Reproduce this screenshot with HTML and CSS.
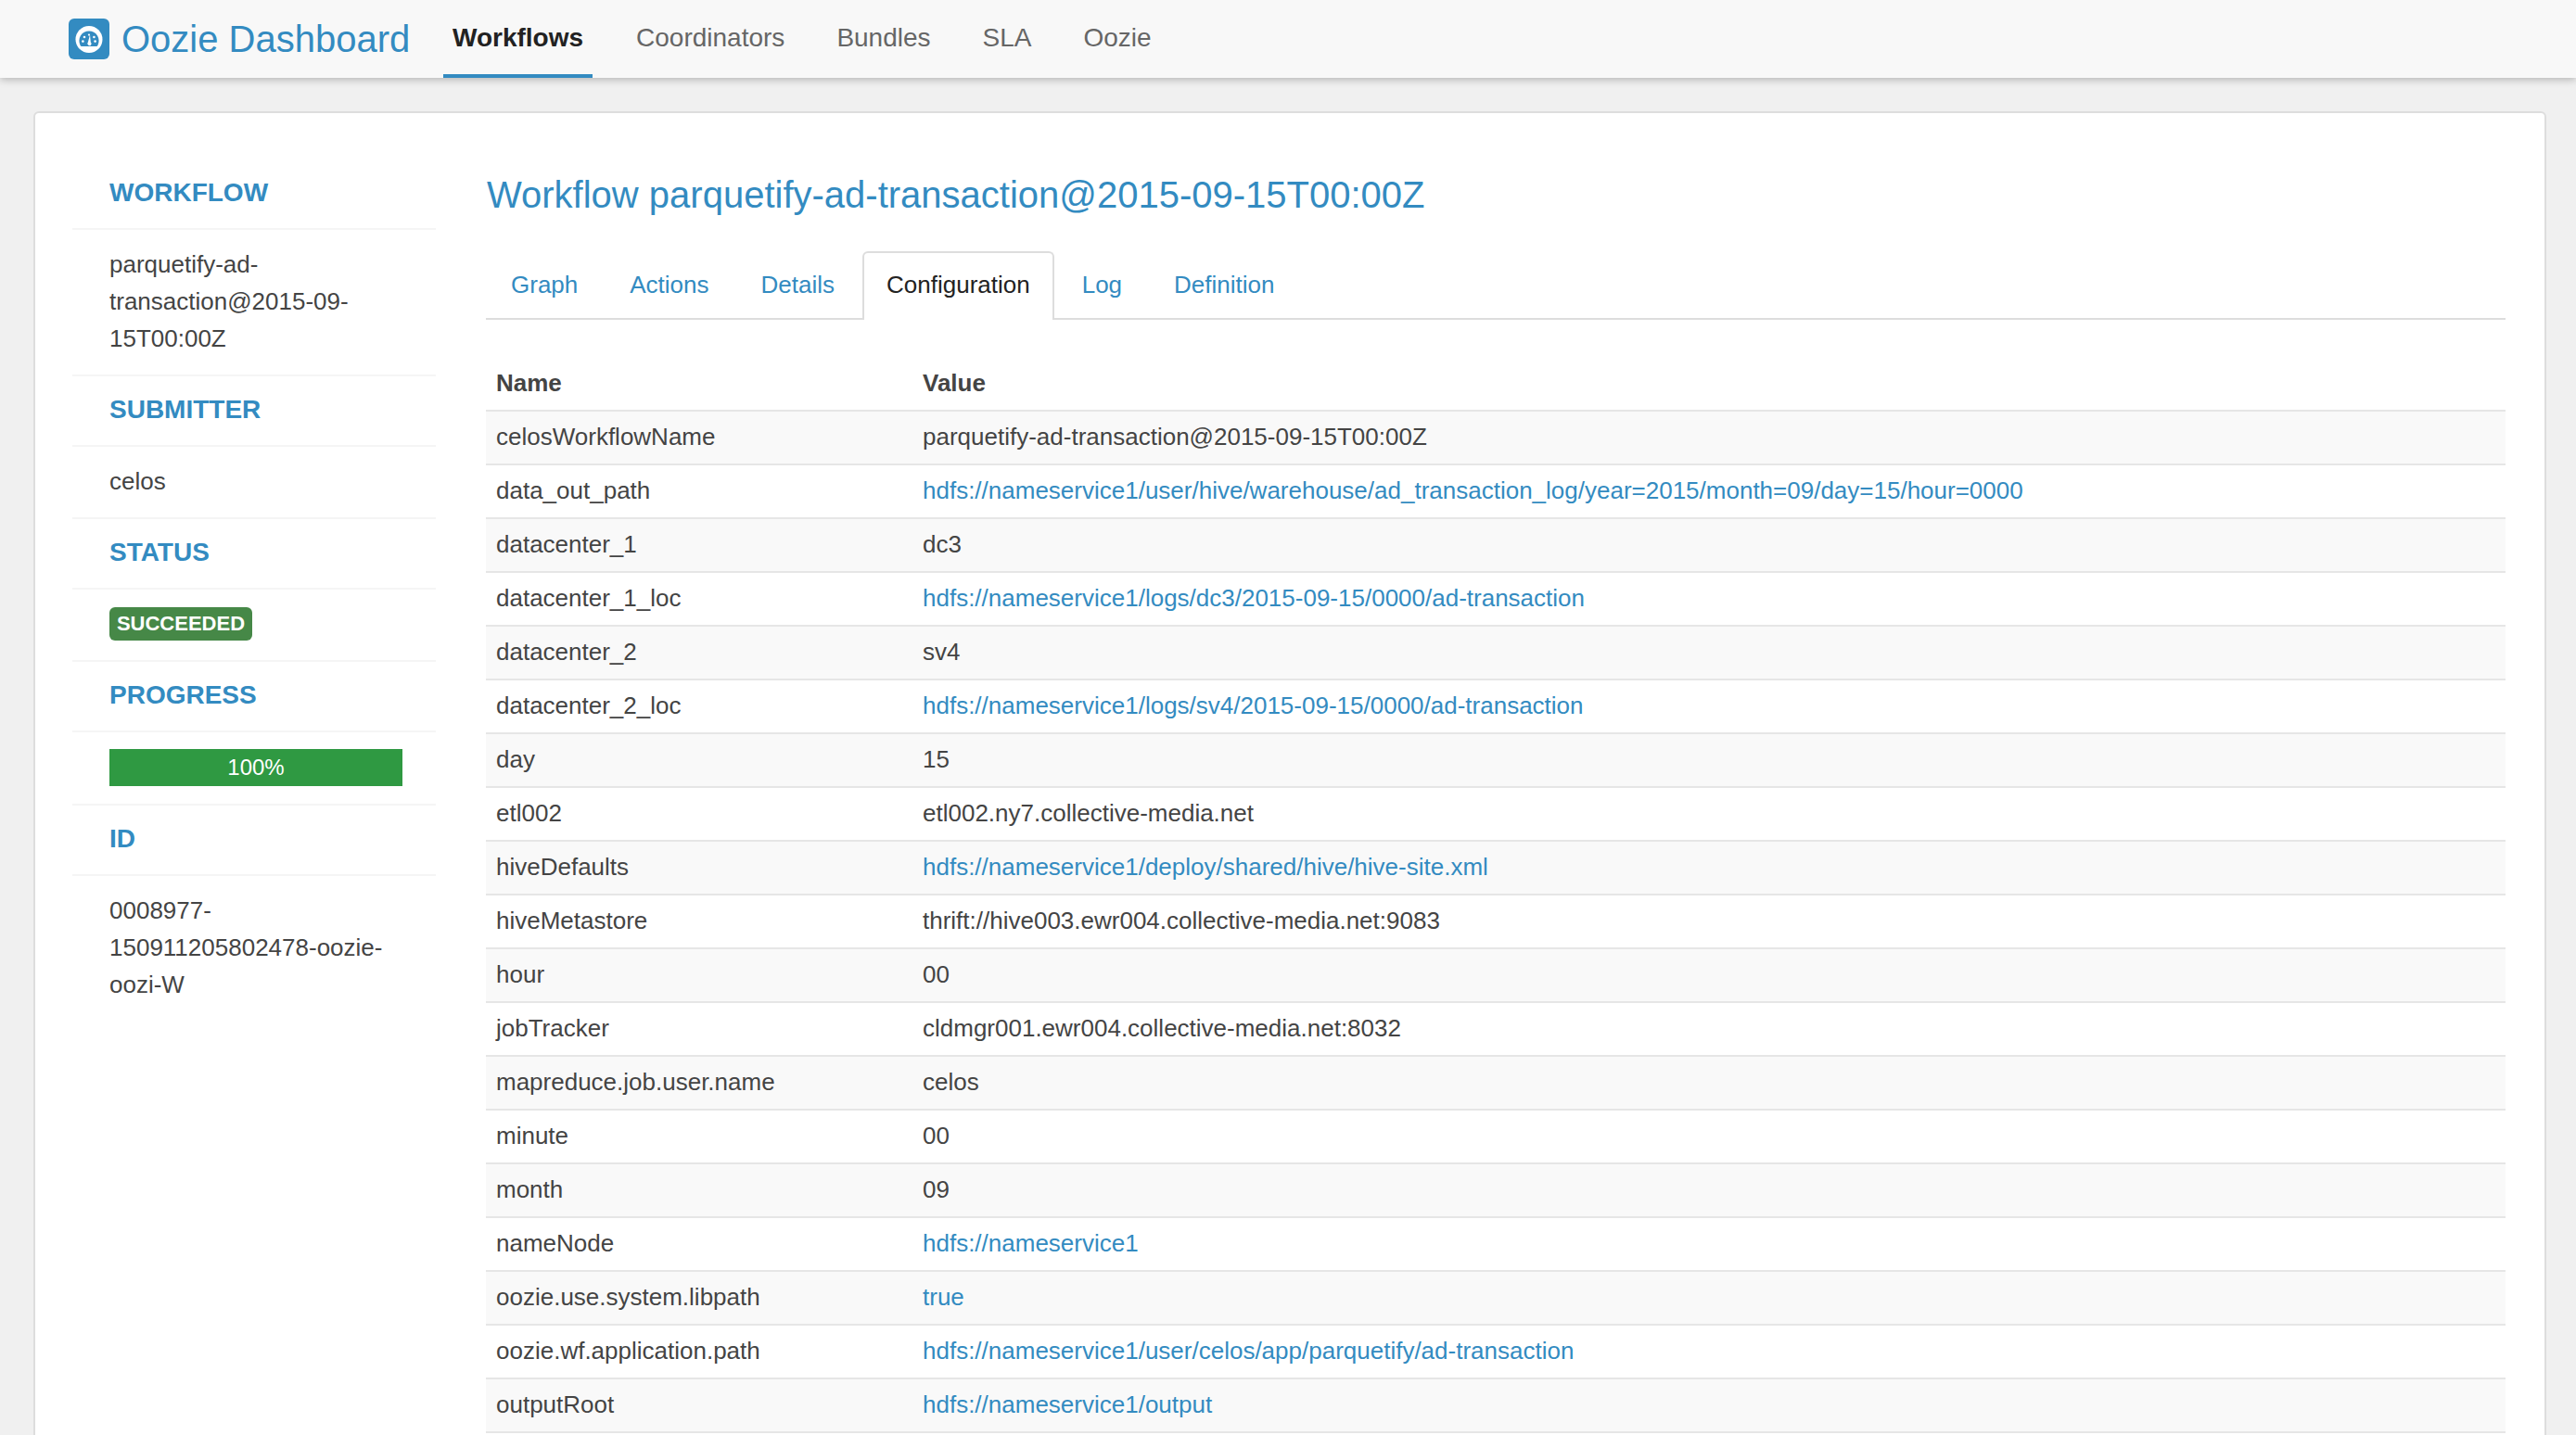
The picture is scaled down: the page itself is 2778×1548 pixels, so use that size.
FILE: index.html
```html
<!DOCTYPE html>
<html lang="en">
<head>
<meta charset="utf-8">
<title>Oozie Dashboard</title>
<link rel="stylesheet" href="styles.css">
</head>
<body>
<header class="navbar">
  <a class="brand" href="#">
    <svg class="logo" viewBox="0 0 44 44" aria-hidden="true">
      <rect width="44" height="44" rx="6" fill="#338bc1"/>
      <circle cx="22" cy="22.5" r="14.5" fill="#fff"/>
      <path d="M12.6 29 A10.6 10.6 0 1 1 31.4 29 A1.6 1.6 0 0 1 30 30 H14 A1.6 1.6 0 0 1 12.6 29 Z" fill="#338bc1"/>
      <path d="M23 17.5 L23.8 25.4 A2.1 2.1 0 1 1 20.9 25.6 Z" fill="#fff"/>
      <circle cx="15.4" cy="24.6" r="1.3" fill="#fff"/>
      <circle cx="17" cy="20" r="1.3" fill="#fff"/>
      <circle cx="22" cy="17.6" r="1.1" fill="#fff"/>
      <circle cx="27.4" cy="20" r="1.3" fill="#fff"/>
      <circle cx="28.6" cy="24.6" r="1.3" fill="#fff"/>
    </svg>
    <span>Oozie Dashboard</span>
  </a>
  <nav class="mainnav">
    <a class="active" href="#">Workflows</a>
    <a href="#">Coordinators</a>
    <a href="#">Bundles</a>
    <a href="#">SLA</a>
    <a href="#">Oozie</a>
  </nav>
</header>
<main class="card">
  <aside class="sidebar">
    <h4 class="label">WORKFLOW</h4>
    <div class="value">parquetify-ad-transaction@2015-09-15T00:00Z</div>
    <h4 class="label">SUBMITTER</h4>
    <div class="value">celos</div>
    <h4 class="label">STATUS</h4>
    <div class="value"><span class="badge">SUCCEEDED</span></div>
    <h4 class="label">PROGRESS</h4>
    <div class="value"><div class="progress">100%</div></div>
    <h4 class="label">ID</h4>
    <div class="value last">0008977-150911205802478-oozie-oozi-W</div>
  </aside>
  <section class="content">
    <h1 class="title">Workflow parquetify-ad-transaction@2015-09-15T00:00Z</h1>
    <ul class="tabs">
      <li><a href="#">Graph</a></li>
      <li><a href="#">Actions</a></li>
      <li><a href="#">Details</a></li>
      <li class="active"><a href="#">Configuration</a></li>
      <li><a href="#">Log</a></li>
      <li><a href="#">Definition</a></li>
    </ul>
    <table class="conf">
      <colgroup><col class="namecol"><col></colgroup>
      <thead><tr><th>Name</th><th>Value</th></tr></thead>
      <tbody>
        <tr><td>celosWorkflowName</td><td>parquetify-ad-transaction@2015-09-15T00:00Z</td></tr>
        <tr><td>data_out_path</td><td><a href="#">hdfs://nameservice1/user/hive/warehouse/ad_transaction_log/year=2015/month=09/day=15/hour=0000</a></td></tr>
        <tr><td>datacenter_1</td><td>dc3</td></tr>
        <tr><td>datacenter_1_loc</td><td><a href="#">hdfs://nameservice1/logs/dc3/2015-09-15/0000/ad-transaction</a></td></tr>
        <tr><td>datacenter_2</td><td>sv4</td></tr>
        <tr><td>datacenter_2_loc</td><td><a href="#">hdfs://nameservice1/logs/sv4/2015-09-15/0000/ad-transaction</a></td></tr>
        <tr><td>day</td><td>15</td></tr>
        <tr><td>etl002</td><td>etl002.ny7.collective-media.net</td></tr>
        <tr><td>hiveDefaults</td><td><a href="#">hdfs://nameservice1/deploy/shared/hive/hive-site.xml</a></td></tr>
        <tr><td>hiveMetastore</td><td>thrift://hive003.ewr004.collective-media.net:9083</td></tr>
        <tr><td>hour</td><td>00</td></tr>
        <tr><td>jobTracker</td><td>cldmgr001.ewr004.collective-media.net:8032</td></tr>
        <tr><td>mapreduce.job.user.name</td><td>celos</td></tr>
        <tr><td>minute</td><td>00</td></tr>
        <tr><td>month</td><td>09</td></tr>
        <tr><td>nameNode</td><td><a href="#">hdfs://nameservice1</a></td></tr>
        <tr><td>oozie.use.system.libpath</td><td><a href="#">true</a></td></tr>
        <tr><td>oozie.wf.application.path</td><td><a href="#">hdfs://nameservice1/user/celos/app/parquetify/ad-transaction</a></td></tr>
        <tr><td>outputRoot</td><td><a href="#">hdfs://nameservice1/output</a></td></tr>
      </tbody>
    </table>
  </section>
</main>
</body>
</html>
```
FILE: styles.css
```css
* { box-sizing: border-box; }
html, body { height: 100%; }
body {
  margin: 0;
  height: 1548px;
  overflow: hidden;
  background: #f0f0f0;
  color: #444;
  font-family: "Liberation Sans", Arial, sans-serif;
  font-size: 26px;
  line-height: 40px;
}
a { color: #338bc1; text-decoration: none; }

.navbar {
  display: flex;
  align-items: stretch;
  height: 84px;
  padding-left: 74px;
  background: #f8f8f8;
  box-shadow: 0 2px 8px rgba(0, 0, 0, .25);
  font-size: 28px;
}
.brand {
  display: flex;
  align-items: center;
  gap: 13px;
  width: 404px;
  color: #338bc1;
  font-size: 40px;
}
.logo { width: 44px; height: 44px; flex: none; margin-top: -1px; }
.mainnav { display: flex; gap: 36px; }
.mainnav a {
  padding: 2px 10px 4px;
  color: #666;
  display: flex;
  align-items: center;
}
.mainnav a.active {
  margin-right: 1px;
  color: #222;
  font-weight: 700;
  border-bottom: 4px solid #338bc1;
  padding-bottom: 0;
}

.card {
  display: flex;
  margin: 36px 32px 0 36px;
  min-height: 1600px;
  padding: 50px 42px 0 40px;
  background: #fff;
  border: 2px solid #ddd;
  border-radius: 6px;
}
.sidebar { width: 392px; flex: none; }
.label {
  margin: 0;
  height: 76px;
  padding: 0 40px;
  border-bottom: 2px solid #f5f5f5;
  color: #338bc1;
  font-size: 28px;
  font-weight: 700;
  line-height: 72px;
}
.value {
  padding: 17px 40px 19px;
  border-bottom: 2px solid #f5f5f5;
  min-height: 78px;
}
.value.last { border-bottom: 0; }
.badge {
  display: block;
  width: 154px;
  height: 36px;
  margin-top: 2px;
  background: #468847;
  border-radius: 6px;
  color: #fff;
  font-size: 22px;
  font-weight: 700;
  line-height: 36px;
  text-align: center;
}
.progress {
  width: 316px;
  height: 40px;
  margin-top: 1px;
  background: #2f9942;
  color: #fff;
  font-size: 24px;
  text-align: center;
}

.content { flex: 1; margin-left: 54px; min-width: 0; }
.title {
  margin: 0;
  height: 99px;
  padding: 8px 0 0 1px;
  color: #338bc1;
  font-size: 40px;
  font-weight: 400;
  line-height: 60px;
}
.tabs {
  display: flex;
  gap: 4px;
  margin: 0;
  padding: 0 0 0 1px;
  height: 74px;
  list-style: none;
  border-bottom: 2px solid #ddd;
}
.tabs li { height: 74px; }
.tabs a {
  display: block;
  height: 74px;
  padding: 14px 24px 0;
  border: 2px solid transparent;
  border-bottom: 0;
  border-radius: 6px 6px 0 0;
}
.tabs .active a {
  color: #222;
  background: #fff;
  border-color: #ddd;
}

.conf {
  width: 100%;
  margin-top: 38px;
  border-collapse: collapse;
  table-layout: fixed;
}
.namecol { width: 460px; }
.conf th, .conf td {
  height: 58px;
  padding: 0 11px 2px;
  text-align: left;
  line-height: 40px;
  border-top: 2px solid #e6e6e6;
  border-bottom: 2px solid #e6e6e6;
}
.conf th { height: 60px; padding-bottom: 0; border-top: 0; font-weight: 700; }
.conf tbody tr:nth-child(odd) { background: #f9f9f9; }
```
